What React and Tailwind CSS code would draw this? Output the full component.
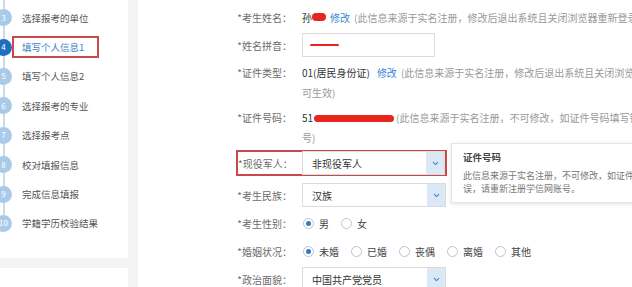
import { ChevronDown } from 'lucide-react';

const steps = [
  { n: 3, label: '选择报考的单位' },
  { n: 4, label: '填写个人信息1', active: true },
  { n: 5, label: '填写个人信息2' },
  { n: 6, label: '选择报考的专业' },
  { n: 7, label: '选择报考点' },
  { n: 8, label: '校对填报信息' },
  { n: 9, label: '完成信息填报' },
  { n: 10, label: '学籍学历校验结果' },
];

function Label({ children }) {
  return <div className="w-[55px] shrink-0 whitespace-nowrap text-right text-[#6b6b6b]">{children}</div>;
}

function Select({ value }) {
  return (
    <div className="flex h-[24px] w-[144px] items-center border border-[#dcdcdc] bg-white">
      <span className="flex-1 pl-[9px] text-[#333]">{value}</span>
      <span className="flex h-full w-[18px] items-center justify-center bg-[#dbe8f6]">
        <ChevronDown className="h-[9px] w-[9px] text-[#4a86c5]" strokeWidth={3} />
      </span>
    </div>
  );
}

function Radio({ label, checked }) {
  return (
    <div className="flex items-center gap-[5px] pr-[12px]">
      <span className="flex h-[11px] w-[11px] items-center justify-center rounded-full border border-[#b9c6d4] bg-white">
        {checked ? <span className="h-[5px] w-[5px] rounded-full bg-[#2f78c4]" /> : null}
      </span>
      <span className="text-[#444]">{label}</span>
    </div>
  );
}

function Sidebar() {
  return (
    <div className="relative h-[258px] bg-white pt-[3px] text-[9.5px]">
      <div className="absolute left-[3px] top-0 h-[224px] w-[2px] bg-[#c9dcee]" />
      {steps.map((s) => (
        <div className="relative flex h-[29.4px] items-center" key={s.n}>
          <span
            className={`-ml-[5px] flex h-[17px] w-[17px] shrink-0 items-center justify-center rounded-full text-[8px] text-white ${
              s.active ? 'bg-[#1f6fbd]' : 'bg-[#a9cbe9]'
            }`}
          >
            {s.n}
          </span>
          <span className={`ml-[10px] whitespace-nowrap ${s.active ? 'text-[#3b7fc6]' : 'text-[#555]'}`}>{s.label}</span>
          {s.active ? (
            <div className="absolute left-[12px] top-[4px] h-[22px] w-[87px] border-2 border-[#c9484b]" />
          ) : null}
        </div>
      ))}
    </div>
  );
}

export default function App() {
  return (
    <div className="flex h-[287px] w-[632px] overflow-hidden bg-[#f3f3f6] font-['Noto_Sans_CJK_SC',sans-serif] text-[10px]">
      <div className="flex w-[128px] shrink-0 flex-col gap-[10px]">
        <Sidebar />
        <div className="flex-1 bg-white" />
      </div>

      <div className="relative ml-[10px] flex-1 bg-white pl-[99px] pt-[3px]">
        <div className="flex h-[28px] items-center gap-[10px]">
          <Label>*考生姓名：</Label>
          <div className="flex items-center whitespace-nowrap">
            <span className="text-[#333]">孙</span>
            <span className="h-[8px] w-[14px] rounded-full bg-[#e8261f]" />
            <span className="ml-[4px] text-[#3a86d6]">修改</span>
            <span className="ml-[4px] text-[#999]">(此信息来源于实名注册，修改后退出系统且关闭浏览器重新登录并同步信息</span>
          </div>
        </div>

        <div className="flex h-[28px] items-center gap-[10px]">
          <Label>*姓名拼音：</Label>
          <div className="flex h-[24px] w-[133px] items-center border border-[#dcdcdc] bg-white pl-[7px]">
            <span className="h-[2px] w-[29px] rounded-full bg-[#e8261f]" />
          </div>
        </div>

        <div className="flex h-[44px] items-start gap-[10px] pt-[4px] leading-[20px]">
          <Label>*证件类型：</Label>
          <div className="whitespace-nowrap">
            <div>
              <span className="text-[#333]">01(居民身份证)</span>
              <span className="ml-[7px] text-[#3a86d6]">修改</span>
              <span className="ml-[4px] text-[#999]">(此信息来源于实名注册，修改后退出系统且关闭浏览器重新登录</span>
            </div>
            <div className="text-[#999]">可生效)</div>
          </div>
        </div>

        <div className="flex h-[45px] items-start gap-[10px] pt-[5px] leading-[20px]">
          <Label>*证件号码：</Label>
          <div className="whitespace-nowrap">
            <div className="flex items-center">
              <span className="text-[#333]">51</span>
              <span className="ml-[1px] h-[7px] w-[80px] rounded-full bg-[#e8261f]" />
              <span className="ml-[2px] text-[#999]">(此信息来源于实名注册，不可修改，如证件号码填写错误，请</span>
            </div>
            <div className="text-[#999]">号)</div>
          </div>
        </div>

        <div className="-ml-[1px] mt-[2px] flex h-[26px] w-[211px] items-center gap-[10px] border-2 border-[#c9484b]">
          <div className="w-[54px] shrink-0 whitespace-nowrap text-right text-[#6b6b6b]">*现役军人：</div>
          <Select value="非现役军人" />
        </div>

        <div className="mt-[5px] flex h-[28px] items-center gap-[10px]">
          <Label>*考生民族：</Label>
          <Select value="汉族" />
        </div>

        <div className="flex h-[28px] items-center gap-[10px]">
          <Label>*考生性别：</Label>
          <div className="flex items-center pl-[1px]">
            <Radio label="男" checked />
            <Radio label="女" />
          </div>
        </div>

        <div className="flex h-[28px] items-center gap-[10px]">
          <Label>*婚姻状况：</Label>
          <div className="flex items-center whitespace-nowrap pl-[1px]">
            <Radio label="未婚" checked />
            <Radio label="已婚" />
            <Radio label="丧偶" />
            <Radio label="离婚" />
            <Radio label="其他" />
          </div>
        </div>

        <div className="flex h-[28px] items-center gap-[10px]">
          <Label>*政治面貌：</Label>
          <Select value="中国共产党党员" />
        </div>

        <div className="absolute left-[313px] top-[143px] h-[60px] w-[215px] border border-[#e4e4e4] bg-white px-[11px] pt-[6px] shadow-[0_1px_4px_rgba(0,0,0,0.12)]">
          <div className="text-[9.5px] font-bold text-[#444]">证件号码</div>
          <div className="mt-[5px] whitespace-nowrap text-[9px] leading-[13px] text-[#777]">
            <div>此信息来源于实名注册，不可修改，如证件号码填写</div>
            <div>误，请重新注册学信网账号。</div>
          </div>
        </div>
      </div>
    </div>
  );
}
